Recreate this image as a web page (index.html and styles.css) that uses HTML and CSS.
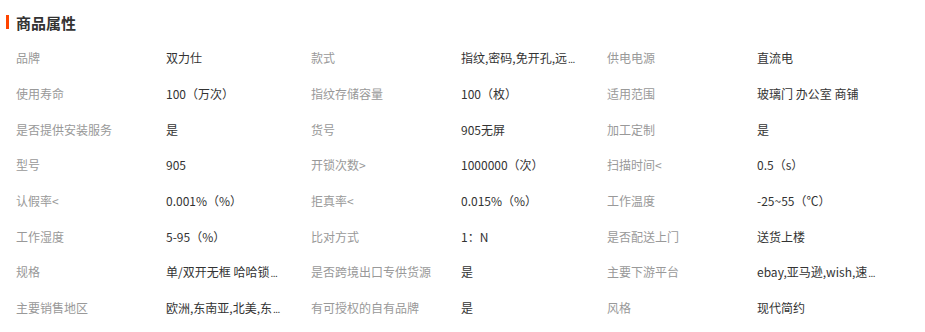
FILE: index.html
```html
<!DOCTYPE html>
<html lang="zh">
<head>
<meta charset="utf-8">
<link rel="stylesheet" href="styles.css">
</head>
<body>
<div class="attrs">
  <h3 class="title"><span class="bar"></span>商品属性</h3>
  <div class="grid">
    <div class="item"><span class="label">品牌</span><span class="value">双力仕</span></div>
    <div class="item"><span class="label">款式</span><span class="value" title="指纹,密码,免开孔,远程开门">指纹,密码,免开孔,远<span class="dots">...</span></span></div>
    <div class="item"><span class="label">供电电源</span><span class="value">直流电</span></div>

    <div class="item"><span class="label">使用寿命</span><span class="value">100（万次）</span></div>
    <div class="item"><span class="label">指纹存储容量</span><span class="value">100（枚）</span></div>
    <div class="item"><span class="label">适用范围</span><span class="value">玻璃门 办公室 商铺</span></div>

    <div class="item"><span class="label">是否提供安装服务</span><span class="value">是</span></div>
    <div class="item"><span class="label">货号</span><span class="value">905无屏</span></div>
    <div class="item"><span class="label">加工定制</span><span class="value">是</span></div>

    <div class="item"><span class="label">型号</span><span class="value">905</span></div>
    <div class="item"><span class="label">开锁次数&gt;</span><span class="value">1000000（次）</span></div>
    <div class="item"><span class="label">扫描时间&lt;</span><span class="value">0.5（s）</span></div>

    <div class="item"><span class="label">认假率&lt;</span><span class="value">0.001%（%）</span></div>
    <div class="item"><span class="label">拒真率&lt;</span><span class="value">0.015%（%）</span></div>
    <div class="item"><span class="label">工作温度</span><span class="value">-25~55（℃）</span></div>

    <div class="item"><span class="label">工作湿度</span><span class="value">5-95（%）</span></div>
    <div class="item"><span class="label">比对方式</span><span class="value">1：N</span></div>
    <div class="item"><span class="label">是否配送上门</span><span class="value">送货上楼</span></div>

    <div class="item"><span class="label">规格</span><span class="value">单/双开无框 哈哈锁<span class="dots">...</span></span></div>
    <div class="item"><span class="label">是否跨境出口专供货源</span><span class="value">是</span></div>
    <div class="item"><span class="label">主要下游平台</span><span class="value">ebay,亚马逊,wish,速<span class="dots">...</span></span></div>

    <div class="item"><span class="label">主要销售地区</span><span class="value">欧洲,东南亚,北美,东<span class="dots">...</span></span></div>
    <div class="item"><span class="label">有可授权的自有品牌</span><span class="value">是</span></div>
    <div class="item"><span class="label">风格</span><span class="value">现代简约</span></div>
  </div>
</div>
</body>
</html>
```

FILE: styles.css
```css
html, body {
  margin: 0;
  padding: 0;
  background: #fff;
}
body {
  font-family: "Microsoft YaHei", "Noto Sans CJK SC", sans-serif;
  font-size: 12px;
}
.attrs {
  padding: 12px 0 0 6px;
}
.title {
  display: flex;
  align-items: center;
  gap: 7px;
  margin: 0;
  height: 20px;
  font-size: 15px;
  font-weight: bold;
  color: #333;
}
.bar {
  width: 3px;
  height: 14px;
  background: #ff4400;
}
.grid {
  display: grid;
  grid-template-columns: 295px 296px 296px;
  grid-auto-rows: 35.7px;
  padding: 8px 0 0 10px;
}
.item {
  display: flex;
  align-items: center;
}
.label {
  width: 150px;
  flex: none;
  color: #999;
  white-space: nowrap;
}
.value {
  color: #333;
  white-space: nowrap;
}
.dots {
  font-size: 10px;
  letter-spacing: -0.5px;
  margin-left: 1px;
}
```
